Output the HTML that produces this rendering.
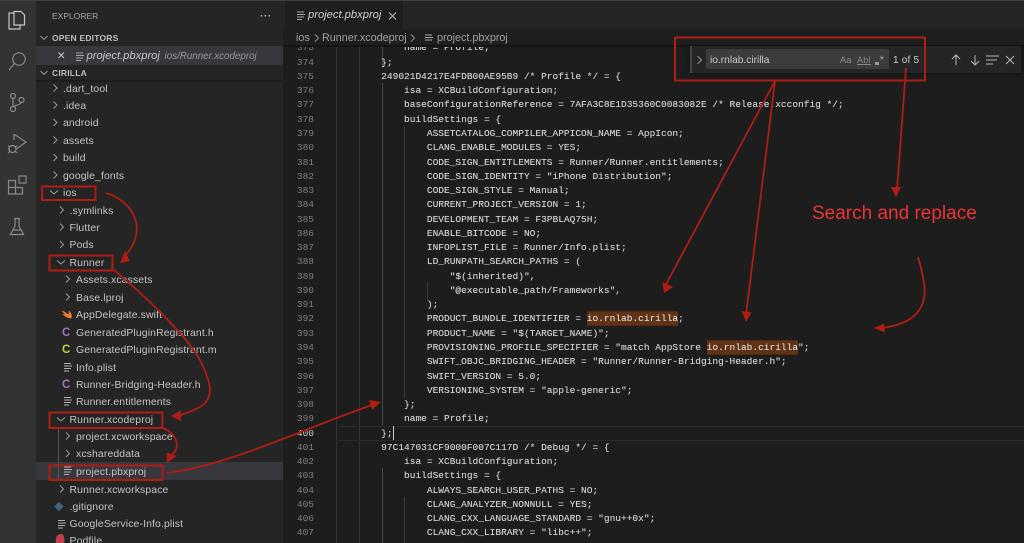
<!DOCTYPE html>
<html>
<head>
<meta charset="utf-8">
<style>
html,body{margin:0;padding:0;background:#1e1e1e;}
#app{position:relative;width:1024px;height:543px;overflow:hidden;background:#1d1d1d;font-family:"Liberation Sans",sans-serif;filter:blur(.3px);}
.a{position:absolute;}
.r{position:absolute;height:17px;line-height:17px;margin-top:1px;font-size:10.4px;color:#c4c4c4;white-space:nowrap;letter-spacing:.14px;}
#code,#nums{position:absolute;top:41.4px;margin:0;font-family:"Liberation Mono",monospace;font-size:9.53px;line-height:14.27px;white-space:pre;}
#code{left:335.5px;color:#d2d2d2;text-shadow:0 0 .6px rgba(210,210,210,.6);}
#nums{left:290px;width:24px;text-align:right;color:#7f7f7f;}
#nums b{font-weight:normal;color:#c6c6c6;}
.hl{background:#613214;color:#ddd;box-shadow:0 1.7px 0 #613214,0 -1.7px 0 #613214;}
.g{position:absolute;width:1px;background:#333;}
</style>
</head>
<body>
<div id="app">
<!-- activity bar -->
<div class="a" style="left:0;top:0;width:36px;height:543px;background:#333334;"></div>
<svg class="a" style="left:0;top:0" width="36" height="240" fill="none" stroke="#c4c4c4" stroke-width="1.2">
<path d="M14 13V11.5H21L24.5 15V25H20M14 13H9V29H20V25M14 13V25H20" />
<g stroke="#8a8a8a">
<circle cx="19" cy="59" r="6.2"/><path d="M14.5 63.5L9 70"/>
<circle cx="13" cy="96" r="2.5"/><circle cx="13" cy="109" r="2.5"/><circle cx="21.5" cy="100" r="2.5"/><path d="M13 98.5V106.5M21 102.5C20 106 15 104 14.5 107"/>
<path d="M14.5 134.5L26 142L17 148.5M14 134V140"/><circle cx="12.5" cy="149" r="3.5"/><path d="M8 145.5L10 147M8 149H9M8 153L10 151M17 145.5L15 147M17 149H16M17 153L15 151"/>
<path d="M8.5 180.5H15.5V187.5H22.5V194H8.5ZM8.5 187.5H15.5V194"/><rect x="19" y="176" width="7" height="7"/>
<path d="M14 218.5H20M15 219V226L10.5 234.5H23.5L19 226V219M12.5 230H21.5"/>
</g>
</svg>
<!-- sidebar -->
<div class="a" style="left:36px;top:0;width:247px;height:543px;background:#252526;"></div>
<div class="a" style="left:52px;top:10px;font-size:8.5px;color:#a8a8a8;line-height:12px;">EXPLORER</div>
<div class="a" style="left:260px;top:12px;font-size:10px;color:#bbb;letter-spacing:.6px;line-height:10px;font-weight:bold;">···</div>
<div class="a" style="left:52px;top:32px;font-size:8.5px;font-weight:bold;color:#bdbdbd;line-height:12px;letter-spacing:.2px;">OPEN EDITORS</div>
<div class="a" style="left:36px;top:46px;width:247px;height:19px;background:#37373d;"></div>
<div class="a" style="left:86.5px;top:48px;line-height:17px;font-size:11.2px;font-style:italic;color:#c8c8c8;">project.pbxproj</div>
<div class="a" style="left:164.5px;top:48px;line-height:17px;font-size:9.8px;font-style:italic;color:#9a9a9a;">ios/Runner.xcodeproj</div>
<div class="a" style="left:52px;top:67px;font-size:8.5px;font-weight:bold;color:#bdbdbd;line-height:12px;letter-spacing:.2px;">CIRILLA</div>
<div class="a" style="left:36px;top:80px;width:247px;height:2px;background:#1c1c1c;"></div>
<div class="a" style="left:36px;top:462px;width:247px;height:18px;background:#37373d;"></div>
<div class="g" style="left:58px;top:428px;height:52px;background:#555;"></div>

<div class="r" style="left:63px;top:80px;">.dart_tool</div>
<div class="r" style="left:63px;top:97px;">.idea</div>
<div class="r" style="left:63px;top:114px;">android</div>
<div class="r" style="left:63px;top:132px;">assets</div>
<div class="r" style="left:63px;top:149px;">build</div>
<div class="r" style="left:63px;top:167px;">google_fonts</div>
<div class="r" style="left:63px;top:184px;">ios</div>
<div class="r" style="left:69.5px;top:202px;">.symlinks</div>
<div class="r" style="left:69.5px;top:219px;">Flutter</div>
<div class="r" style="left:69.5px;top:236px;">Pods</div>
<div class="r" style="left:69.5px;top:254px;">Runner</div>
<div class="r" style="left:76px;top:271px;">Assets.xcassets</div>
<div class="r" style="left:76px;top:289px;">Base.lproj</div>
<div class="r" style="left:76px;top:306px;">AppDelegate.swift</div>
<div class="r" style="left:76px;top:324px;">GeneratedPluginRegistrant.h</div>
<div class="r" style="left:76px;top:341px;">GeneratedPluginRegistrant.m</div>
<div class="r" style="left:76px;top:358.5px;">Info.plist</div>
<div class="r" style="left:76px;top:376px;">Runner-Bridging-Header.h</div>
<div class="r" style="left:76px;top:393px;">Runner.entitlements</div>
<div class="r" style="left:69.5px;top:411px;">Runner.xcodeproj</div>
<div class="r" style="left:76px;top:428px;">project.xcworkspace</div>
<div class="r" style="left:76px;top:445px;">xcshareddata</div>
<div class="r" style="left:76px;top:463px;">project.pbxproj</div>
<div class="r" style="left:69.5px;top:480.5px;">Runner.xcworkspace</div>
<div class="r" style="left:69.5px;top:498px;">.gitignore</div>
<div class="r" style="left:69.5px;top:515px;">GoogleService-Info.plist</div>
<div class="r" style="left:69.5px;top:532px;">Podfile</div>

<svg class="a" style="left:36px;top:0" width="247" height="543" fill="none" stroke="#a0a0a0" stroke-width=".9">
<!-- section chevrons -->
<path d="M4.500 36L8 39.500L11.500 36M4.500 71L8 74.500L11.500 71"/>
<path d="M22.500 52.500L28 58M28 52.500L22.500 58" stroke="#ccc"/>
<path d="M40 53H47M40 55.500H48M40 58H47M40 60.500H45" stroke="#aaa"/>
<!-- closed chevrons level1 -->
<path d="M17.500 84.500L21 88L17.500 91.500M17.500 101.500L21 105L17.500 108.500M17.500 119L21 122.500L17.500 126M17.500 136.500L21 140L17.500 143.500M17.500 154L21 157.500L17.500 161M17.500 171.500L21 175L17.500 178.500"/>
<path d="M14 190.500L18 194L22 190.500"/>
<!-- level2 -->
<path d="M24 206.500L27.500 210L24 213.500M24 223.500L27.500 227L24 230.500M24 241L27.500 244.500L24 248"/>
<path d="M21 260.500L25 264L29 260.500"/>
<path d="M30 275.500L33.500 279L30 282.500M30 293.500L33.500 297L30 300.500"/>
<path d="M21 417.500L25 421L29 417.500"/>
<path d="M30 432.500L33.500 436L30 439.500M30 450L33.500 453.500L30 457"/>
<path d="M24 485.500L27.500 489L24 492.500"/>
<!-- file lines -->
<g stroke="#b0b0b0">
<path d="M28 363.500H35M28 366H36M28 368.500H35M28 371H33"/>
<path d="M28 397.500H35M28 400H36M28 402.500H35M28 405H33"/>
<path d="M28 467H35M28 469.500H36M28 472H35M28 474.500H33"/>
<path d="M22 520.500H29M22 523H30M22 525.500H29M22 528H27"/>
</g>
<!-- swift -->
<path d="M26.500 314C30 317 33 318 35 318C36 316 35 313 33 311C34 314 32 315 31 314C30 313 28 312 26.500 311C28 313 29 314 30 315C28 315 27 314.500 26.500 314Z" fill="#f07b2e" stroke="#f07b2e" stroke-width=".8"/>
<!-- gitignore diamond -->
<path d="M23 502.500L27 506.500L23 510.500L19 506.500Z" fill="#41677f" stroke="#41677f"/>
<!-- podfile -->
<path d="M20 543C19 536 22 534 25 534C28 534 29 538 28 543Z" fill="#c0404a" stroke="none"/>
</svg>
<div class="a" style="left:62px;top:324px;font-size:11.5px;font-weight:bold;color:#a074c4;line-height:18px;">C</div>
<div class="a" style="left:62px;top:341px;font-size:11.5px;font-weight:bold;color:#cbcb41;line-height:18px;">C</div>
<div class="a" style="left:62px;top:376px;font-size:11.5px;font-weight:bold;color:#a074c4;line-height:18px;">C</div>

<!-- guides -->
<div class="g" style="left:336px;top:46px;height:497px;"></div>
<div class="g" style="left:358.500px;top:46px;height:497px;"></div>
<div class="g" style="left:381.500px;top:46px;height:22px;background:#484848;"></div>
<div class="g" style="left:381.500px;top:83px;height:342px;background:#484848;"></div>
<div class="g" style="left:381.500px;top:468px;height:75px;background:#484848;"></div>
<div class="g" style="left:404px;top:126px;height:272px;background:#3a3a3a;"></div>
<div class="g" style="left:404px;top:497px;height:46px;background:#3a3a3a;"></div>
<div class="g" style="left:427px;top:282px;height:20px;background:#3a3a3a;"></div>

<!-- current line -->
<div class="a" style="left:336px;top:425.5px;width:688px;height:13px;border-top:1px solid #2a2a2a;border-bottom:1px solid #2a2a2a;"></div>
<div class="a" style="left:392.500px;top:425.5px;width:1px;height:14px;background:#c8c8c8;"></div>

<pre id="nums">373
374
375
376
377
378
379
380
381
382
383
384
385
386
387
388
389
390
391
392
393
394
395
396
397
398
399
<b>400</b>
401
402
403
404
405
406
407
408</pre>
<pre id="code">            name = Profile;
        };
        249021D4217E4FDB00AE95B9 /* Profile */ = {
            isa = XCBuildConfiguration;
            baseConfigurationReference = 7AFA3C8E1D35360C0083082E /* Release.xcconfig */;
            buildSettings = {
                ASSETCATALOG_COMPILER_APPICON_NAME = AppIcon;
                CLANG_ENABLE_MODULES = YES;
                CODE_SIGN_ENTITLEMENTS = Runner/Runner.entitlements;
                CODE_SIGN_IDENTITY = "iPhone Distribution";
                CODE_SIGN_STYLE = Manual;
                CURRENT_PROJECT_VERSION = 1;
                DEVELOPMENT_TEAM = F3PBLAQ75H;
                ENABLE_BITCODE = NO;
                INFOPLIST_FILE = Runner/Info.plist;
                LD_RUNPATH_SEARCH_PATHS = (
                    "$(inherited)",
                    "@executable_path/Frameworks",
                );
                PRODUCT_BUNDLE_IDENTIFIER = <span class="hl">io.rnlab.cirilla</span>;
                PRODUCT_NAME = "$(TARGET_NAME)";
                PROVISIONING_PROFILE_SPECIFIER = "match AppStore <span class="hl">io.rnlab.cirilla</span>";
                SWIFT_OBJC_BRIDGING_HEADER = "Runner/Runner-Bridging-Header.h";
                SWIFT_VERSION = 5.0;
                VERSIONING_SYSTEM = "apple-generic";
            };
            name = Profile;
        };
        97C147031CF9000F007C117D /* Debug */ = {
            isa = XCBuildConfiguration;
            buildSettings = {
                ALWAYS_SEARCH_USER_PATHS = NO;
                CLANG_ANALYZER_NONNULL = YES;
                CLANG_CXX_LANGUAGE_STANDARD = "gnu++0x";
                CLANG_CXX_LIBRARY = "libc++";
                CLANG_ENABLE_MODULES = YES;</pre>

<!-- editor header (painted over the code so line 373 is clipped) -->
<div class="a" style="left:283px;top:29px;width:741px;height:17px;background:#1e1e1e;"></div>
<div class="a" style="left:283px;top:45px;width:741px;height:1.500px;background:#141414;"></div>
<div class="a" style="left:283px;top:0;width:741px;height:29px;background:#252526;"></div>
<div class="a" style="left:0;top:0;width:1024px;height:1px;background:#3f3f3f;"></div>
<div class="a" style="left:285px;top:1px;width:118px;height:28px;background:#1e1e1e;"></div>
<svg class="a" style="left:285px;top:0" width="150" height="46" fill="none" stroke="#aaa" stroke-width="1">
<path d="M12 12H19M12 14.500H20M12 17H19M12 19.500H17"/>
<path d="M104 12.500L111 19.500M111 12.500L104 19.500" stroke="#bbb"/>
<path d="M140 35H147M140 37.500H148M140 40H147" stroke="#aaa"/>
</svg>
<div class="a" style="left:308px;top:7px;line-height:17px;font-size:11.2px;font-style:italic;color:#d0d0d0;">project.pbxproj</div>
<div class="a" style="left:296px;top:30px;line-height:17px;font-size:10.8px;color:#a0a0a0;white-space:nowrap;">ios</div>
<div class="a" style="left:322px;top:30px;line-height:17px;font-size:10.8px;color:#a0a0a0;white-space:nowrap;">Runner.xcodeproj</div>
<div class="a" style="left:437px;top:30px;line-height:17px;font-size:10.8px;color:#a0a0a0;white-space:nowrap;">project.pbxproj</div>
<svg class="a" style="left:310px;top:30px" width="110" height="16" fill="none" stroke="#999" stroke-width=".9"><path d="M5 4.500L8.500 8L5 11.500M101 4.500L104.500 8L101 11.500"/></svg>

<!-- find widget -->
<div class="a" style="left:690px;top:46px;width:331px;height:27px;background:#252526;box-shadow:0 1px 4px #111;"></div>
<div class="a" style="left:690px;top:46px;width:2px;height:27px;background:#454545;"></div>
<div class="a" style="left:706px;top:49px;width:183px;height:20px;background:#3c3c3c;"></div>
<div class="a" style="left:710px;top:52.5px;line-height:16px;font-size:10.2px;color:#c8c8c8;">io.rnlab.cirilla</div>
<div class="a" style="left:840px;top:53px;line-height:14px;font-size:9.4px;color:#8a8a8a;">Aa</div>
<div class="a" style="left:857px;top:53px;line-height:14px;font-size:9px;color:#8a8a8a;letter-spacing:.3px;text-decoration:underline;">Abl</div>
<div class="a" style="left:893px;top:53px;line-height:15px;font-size:10px;color:#c8c8c8;letter-spacing:.2px;">1 of 5</div>
<div class="a" style="left:879.500px;top:53px;line-height:14px;font-size:12px;color:#999;">*</div>
<div class="a" style="left:875px;top:61.500px;width:3.500px;height:3.500px;background:#999;"></div>
<svg class="a" style="left:690px;top:46px" width="331" height="27" fill="none" stroke="#b8b8b8" stroke-width="1">
<path d="M7.500 10L11.500 14L7.500 18" stroke="#999"/>
<path d="M266 19V9M262 13L266 9L270 13M285 9V19M281 15L285 19L289 15"/>
<path d="M296 10H309M296 14H307M296 18H303"/>
<path d="M316 10L324 18M324 10L316 18"/>
</svg>

<!-- annotations -->
<svg class="a" style="left:0;top:0" width="1024" height="543" fill="none" stroke="#b01d12" stroke-width="2">
<rect x="675" y="37.500" width="250" height="43"/>
<rect x="42" y="186.500" width="53.500" height="13.500"/>
<rect x="49.500" y="255.500" width="63" height="15"/>
<rect x="49.500" y="412.500" width="113" height="15.500"/>
<rect x="49.500" y="465.500" width="113" height="14.500"/>
<g stroke-width="1.800">
<path d="M106 193C131 200 150 228 125 256"/>
<path d="M114 270C150 300 188 338 200 360C213 386 214 400 198 408C190 412 184 414 178 416"/>
<path d="M163 428C176 434 182 446 171 456"/>
<path d="M167 473C230 465 300 430 372 405"/>
<path d="M775 81L664 288"/>
<path d="M775 81L746 315"/>
<path d="M906 68L897 190"/>
<path d="M918 257C926 285 928 300 917 313C908 323 895 326 882 328"/>
</g>
<g fill="#b01d12" stroke="none">
<path d="M120 263L130 261L125 251Z"/>
<path d="M171 416L181 410.500L181 421Z"/>
<path d="M167 463L166.500 452.500L177 456Z"/>
<path d="M381 402L369 400L372 410Z"/>
<path d="M664 293L662.500 282L673 287Z"/>
<path d="M746 322L741.500 311L751.500 312.500Z"/>
<path d="M896 197L891 187L901 187Z"/>
<path d="M874 328L884 323.500L885 332.500Z"/>
</g>
</svg>
<div class="a" style="left:812px;top:203px;font-size:19px;line-height:22px;color:#ec3434;white-space:nowrap;">Search and replace</div>
</div>
</body>
</html>
